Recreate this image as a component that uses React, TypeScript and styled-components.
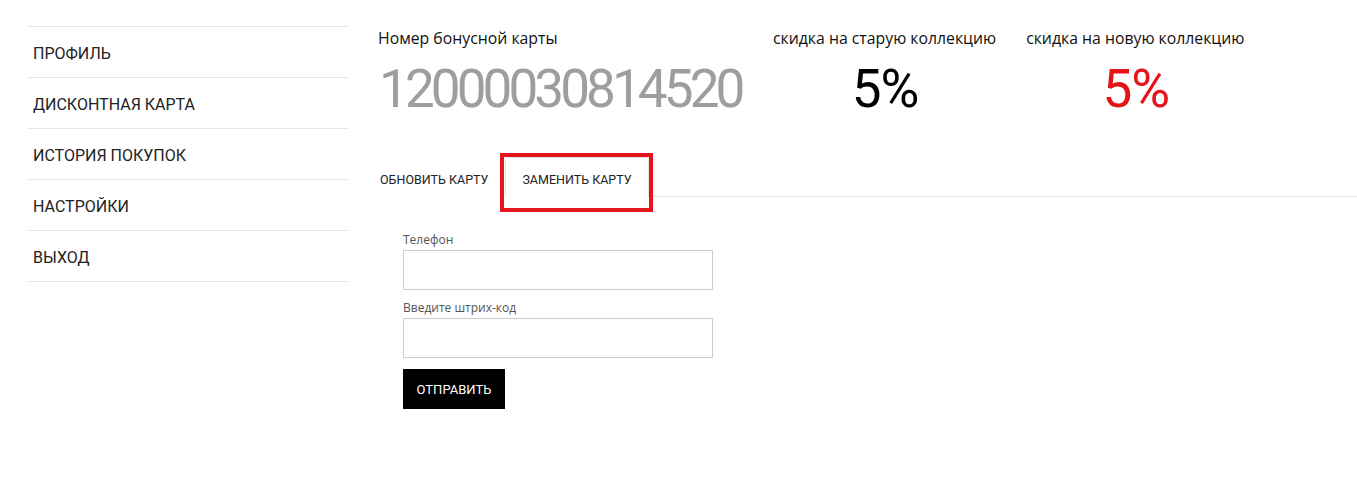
import React from 'react'
import styled, { createGlobalStyle } from 'styled-components'

const GlobalStyle = createGlobalStyle`
  body {
    margin: 0;
    background: #fff;
    font-family: Roboto, "Liberation Sans", sans-serif;
    color: #222;
  }
`

const Page = styled.div`
  display: flex;
  padding: 26px 0 0 28px;
  gap: 15px;
`

const Sidebar = styled.ul`
  list-style: none;
  margin: 0;
  padding: 0;
  width: 320px;
  border-top: 1px solid #e6e6e6;
  flex-shrink: 0;
`

const MenuItem = styled.li`
  height: 51px;
  border-bottom: 1px solid #e6e6e6;
  display: flex;
  align-items: center;
  padding-left: 5px;
  padding-top: 2px;
  font-size: 16px;
  color: #222;
  box-sizing: border-box;
`

const Main = styled.div`
  flex: 1;
`

const Stats = styled.div`
  display: flex;
  gap: 30px;
  padding-left: 15px;
`

const Stat = styled.div<{ $width?: number; $center?: boolean }>`
  display: flex;
  flex-direction: column;
  align-items: ${(p) => (p.$center ? 'center' : 'flex-start')};
  width: ${(p) => (p.$width ? `${p.$width}px` : 'auto')};
`

const StatLabel = styled.div`
  font-family: "Open Sans", sans-serif;
  font-size: 15.8px;
  line-height: 20px;
  margin-top: 2px;
  color: #111;
`

const StatValue = styled.div<{ $color: string; $spacing: number }>`
  font-family: Roboto, sans-serif;
  font-size: 53px;
  line-height: 53px;
  margin-top: 15px;
  margin-left: 1px;
  color: ${(p) => p.$color};
  letter-spacing: ${(p) => p.$spacing}px;
`

const TabBar = styled.div`
  display: flex;
  margin-top: 41px;
  border-bottom: 1px solid #e6e6e6;
`

const Tab = styled.div<{ $active?: boolean }>`
  position: relative;
  height: 40px;
  padding: 4px 16px 0;
  display: flex;
  align-items: center;
  font-size: 12.5px;
  color: #222;
  border: 1px solid ${(p) => (p.$active ? '#e6e6e6' : 'transparent')};
  border-bottom: none;
  margin-bottom: -1px;
  background: #fff;
  box-sizing: border-box;
`

/* red annotation frame drawn over the active tab */
const Highlight = styled.div`
  position: absolute;
  left: -6px;
  top: -5px;
  right: -5px;
  bottom: -15px;
  border: 4px solid #e3161f;
`

const Form = styled.form`
  display: flex;
  flex-direction: column;
  padding: 35px 0 0 40px;
  width: 310px;
`

const FieldLabel = styled.label`
  font-family: "Open Sans", sans-serif;
  font-size: 12px;
  line-height: 16px;
  color: #555;
  margin-bottom: 2px;
`

const Input = styled.input`
  height: 40px;
  width: 310px;
  box-sizing: border-box;
  border: 1px solid #ccc;
  margin: 0 0 10px;
  padding: 0 8px;
`

const Button = styled.button`
  align-self: flex-start;
  width: 102px;
  height: 40px;
  margin-top: 1px;
  padding: 0;
  background: #000;
  color: #fff;
  border: none;
  font-family: Roboto, sans-serif;
  font-size: 13px;
`

const menu = ['ПРОФИЛЬ', 'ДИСКОНТНАЯ КАРТА', 'ИСТОРИЯ ПОКУПОК', 'НАСТРОЙКИ', 'ВЫХОД']

export default function App() {
  return (
    <>
      <GlobalStyle />
      <Page>
        <Sidebar>
          {menu.map((m) => (
            <MenuItem key={m}>{m}</MenuItem>
          ))}
        </Sidebar>
        <Main>
          <Stats>
            <Stat $width={365}>
              <StatLabel>Номер бонусной карты</StatLabel>
              <StatValue $color="#9e9e9e" $spacing={-3.9}>12000030814520</StatValue>
            </Stat>
            <Stat $center>
              <StatLabel>скидка на старую коллекцию</StatLabel>
              <StatValue $color="#000" $spacing={-1}>5%</StatValue>
            </Stat>
            <Stat $center>
              <StatLabel>скидка на новую коллекцию</StatLabel>
              <StatValue $color="#e5141b" $spacing={-1}>5%</StatValue>
            </Stat>
          </Stats>
          <TabBar>
            <Tab>ОБНОВИТЬ КАРТУ</Tab>
            <Tab $active>
              ЗАМЕНИТЬ КАРТУ
              <Highlight />
            </Tab>
          </TabBar>
          <Form onSubmit={(e) => e.preventDefault()}>
            <FieldLabel>Телефон</FieldLabel>
            <Input type="text" />
            <FieldLabel>Введите штрих-код</FieldLabel>
            <Input type="text" />
            <Button type="submit">ОТПРАВИТЬ</Button>
          </Form>
        </Main>
      </Page>
    </>
  )
}
